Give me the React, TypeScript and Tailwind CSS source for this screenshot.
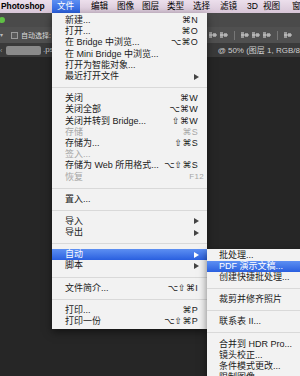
import React from "react";

type Item =
  | { sep: true }
  | {
      label: string;
      key?: string;
      sub?: boolean;
      off?: boolean;
      active?: boolean;
      f?: boolean;
    };

const fileMenu: Item[] = [
  { label: "新建...", key: "⌘N" },
  { label: "打开...", key: "⌘O" },
  { label: "在 Bridge 中浏览...", key: "⌥⌘O" },
  { label: "在 Mini Bridge 中浏览..." },
  { label: "打开为智能对象..." },
  { label: "最近打开文件", sub: true },
  { sep: true },
  { label: "关闭", key: "⌘W" },
  { label: "关闭全部", key: "⌥⌘W" },
  { label: "关闭并转到 Bridge...", key: "⇧⌘W" },
  { label: "存储", key: "⌘S", off: true },
  { label: "存储为...", key: "⇧⌘S" },
  { label: "签入...", off: true },
  { label: "存储为 Web 所用格式...", key: "⌥⇧⌘S" },
  { label: "恢复", key: "F12", off: true, f: true },
  { sep: true },
  { label: "置入..." },
  { sep: true },
  { label: "导入", sub: true },
  { label: "导出", sub: true },
  { sep: true },
  { label: "自动", sub: true, active: true },
  { label: "脚本", sub: true },
  { sep: true },
  { label: "文件简介...", key: "⌥⇧⌘I" },
  { sep: true },
  { label: "打印...", key: "⌘P" },
  { label: "打印一份", key: "⌥⇧⌘P" },
];

const autoMenu: Item[] = [
  { label: "批处理..." },
  { label: "PDF 演示文稿...", active: true },
  { label: "创建快捷批处理..." },
  { sep: true },
  { label: "裁剪并修齐照片" },
  { sep: true },
  { label: "联系表 II..." },
  { sep: true },
  { label: "合并到 HDR Pro..." },
  { label: "镜头校正..." },
  { label: "条件模式更改..." },
  { label: "限制图像..." },
];

const topMenus = [
  { t: "编辑", w: "w-[26px]" },
  { t: "图像", w: "w-[25px]" },
  { t: "图层", w: "w-[25px]" },
  { t: "类型", w: "w-[26px]" },
  { t: "选择", w: "w-[27px]" },
  { t: "滤镜", w: "w-[27px]" },
  { t: "3D", w: "w-[16px]" },
  { t: "视图", w: "w-[29px]" },
  { t: "窗口", w: "w-[20px]" },
];

const Arrow = ({ white }: { white?: boolean }) => (
  <svg width="5" height="6" viewBox="0 0 5 6" className="mr-[-1px]">
    <path d="M0 0 L5 3 L0 6 Z" fill={white ? "#fff" : "#444"} />
  </svg>
);

const MenuRows = ({ items, pl, pr }: { items: Item[]; pl: string; pr: string }) => (
  <>
    {items.map((it, i) => {
      if ("sep" in it) {
        return (
          <div key={i} className="h-[11px] flex items-center">
            <div className="h-px w-full bg-[#d9d9d9]" />
          </div>
        );
      }
      const color = it.active
        ? "text-white"
        : it.off
          ? "text-[#a6a6a6]"
          : "text-[#1a1a1a]";
      return (
        <div
          key={i}
          className={`h-[11.2px] flex items-center justify-between ${pl} ${pr} ${color} ${
            it.active ? "bg-gradient-to-b from-[#5d8ff2] to-[#2a5fdf]" : ""
          }`}
        >
          <span className="whitespace-nowrap">{it.label}</span>
          {it.key && (
            <span className={`whitespace-nowrap tracking-[0.3px] ${it.f ? "text-[8px] mr-[-6px]" : ""}`}>
              {it.key}
            </span>
          )}
          {it.sub && <Arrow white={it.active} />}
        </div>
      );
    })}
  </>
);

const AlignIcon = () => (
  <svg width="8" height="8" viewBox="0 0 8 8">
    <rect x="0" y="1" width="3" height="6" fill="#9a9a9a" />
    <rect x="4" y="2" width="3" height="4" fill="#9a9a9a" />
    <rect x="0" y="3.5" width="8" height="1" fill="#cfcfcf" />
  </svg>
);

export default function App() {
  return (
    <div className="relative w-[300px] h-[376px] overflow-hidden bg-[#262626] font-['Liberation_Sans','DejaVu_Sans','Noto_Sans_CJK_SC',sans-serif]">
      {/* mac menubar */}
      <div className="h-[13px] flex items-center bg-gradient-to-b from-[#ecdfec] to-[#d8c6d7] text-[8.6px] leading-none text-black">
        <span className="w-[52px] shrink-0 pl-[1px] font-bold text-[8.4px]">Photoshop</span>
        <span className="w-[28px] shrink-0 h-full flex items-center pl-[5px] text-white bg-gradient-to-b from-[#5d8ff2] to-[#2a5fdf]">
          文件
        </span>
        <span className="w-[11px] shrink-0" />
        {topMenus.map((m) => (
          <span key={m.t} className={`${m.w} shrink-0 whitespace-nowrap`}>
            {m.t}
          </span>
        ))}
      </div>

      {/* options bar */}
      <div className="h-[14px] bg-[#4a4a4a] flex items-center">
        <div className="w-[6px] h-[6px] rounded-full bg-[#5fbf45] ml-[-1px]" />
      </div>
      <div className="h-[16px] bg-[#505050] flex items-center text-[7px] text-[#dcdcdc] leading-none">
        <span className="text-[6px] text-[#bbb] w-[11px] shrink-0">▾</span>
        <div className="w-[7px] h-[7px] shrink-0 border border-[#9a9a9a] bg-[#5a5a5a]" />
        <span className="ml-[3px]">自动选择:</span>
        <div className="ml-auto mr-[8px] flex items-center gap-[3px]">
          <AlignIcon />
          <AlignIcon />
          <div className="w-px h-[9px] bg-[#777] mx-[3px]" />
          <AlignIcon />
          <AlignIcon />
          <AlignIcon />
          <div className="w-px h-[9px] bg-[#777] mx-[3px]" />
          <AlignIcon />
        </div>
      </div>

      {/* document tabs */}
      <div className="h-[14px] bg-[#3a3a3a] flex items-center text-[8px] text-[#cfcfcf] leading-none">
        <span className="w-[6px] shrink-0 text-[7px] text-[#999]">‹</span>
        <div className="w-[35px] h-[9px] shrink-0 rounded-[2px] bg-[#8a8a8a]" />
        <span className="ml-[2px]">.ps</span>
        <div className="ml-auto flex items-center">
          <div className="w-[9px] h-[8px] bg-[#e6e6e6] mt-[4px]" />
          <span className="ml-[12px] whitespace-nowrap mt-[2px]">@ 50% (图层 1, RGB/8</span>
        </div>
      </div>

      {/* file menu */}
      <div className="absolute left-[52px] top-[13px] w-[155px] pt-[2px] pb-[2px] bg-[#f2f2f2] shadow-[0_3px_8px_rgba(0,0,0,0.5)] text-[9px] leading-none">
        <MenuRows items={fileMenu} pl="pl-[13px]" pr="pr-[9px]" />
      </div>

      {/* automate submenu */}
      <div className="absolute left-[207px] top-[249px] w-[110px] pt-[0.5px] bg-[#f2f2f2] shadow-[0_3px_8px_rgba(0,0,0,0.5)] text-[9px] leading-none">
        <MenuRows items={autoMenu} pl="pl-[12px]" pr="pr-[4px]" />
      </div>
    </div>
  );
}
